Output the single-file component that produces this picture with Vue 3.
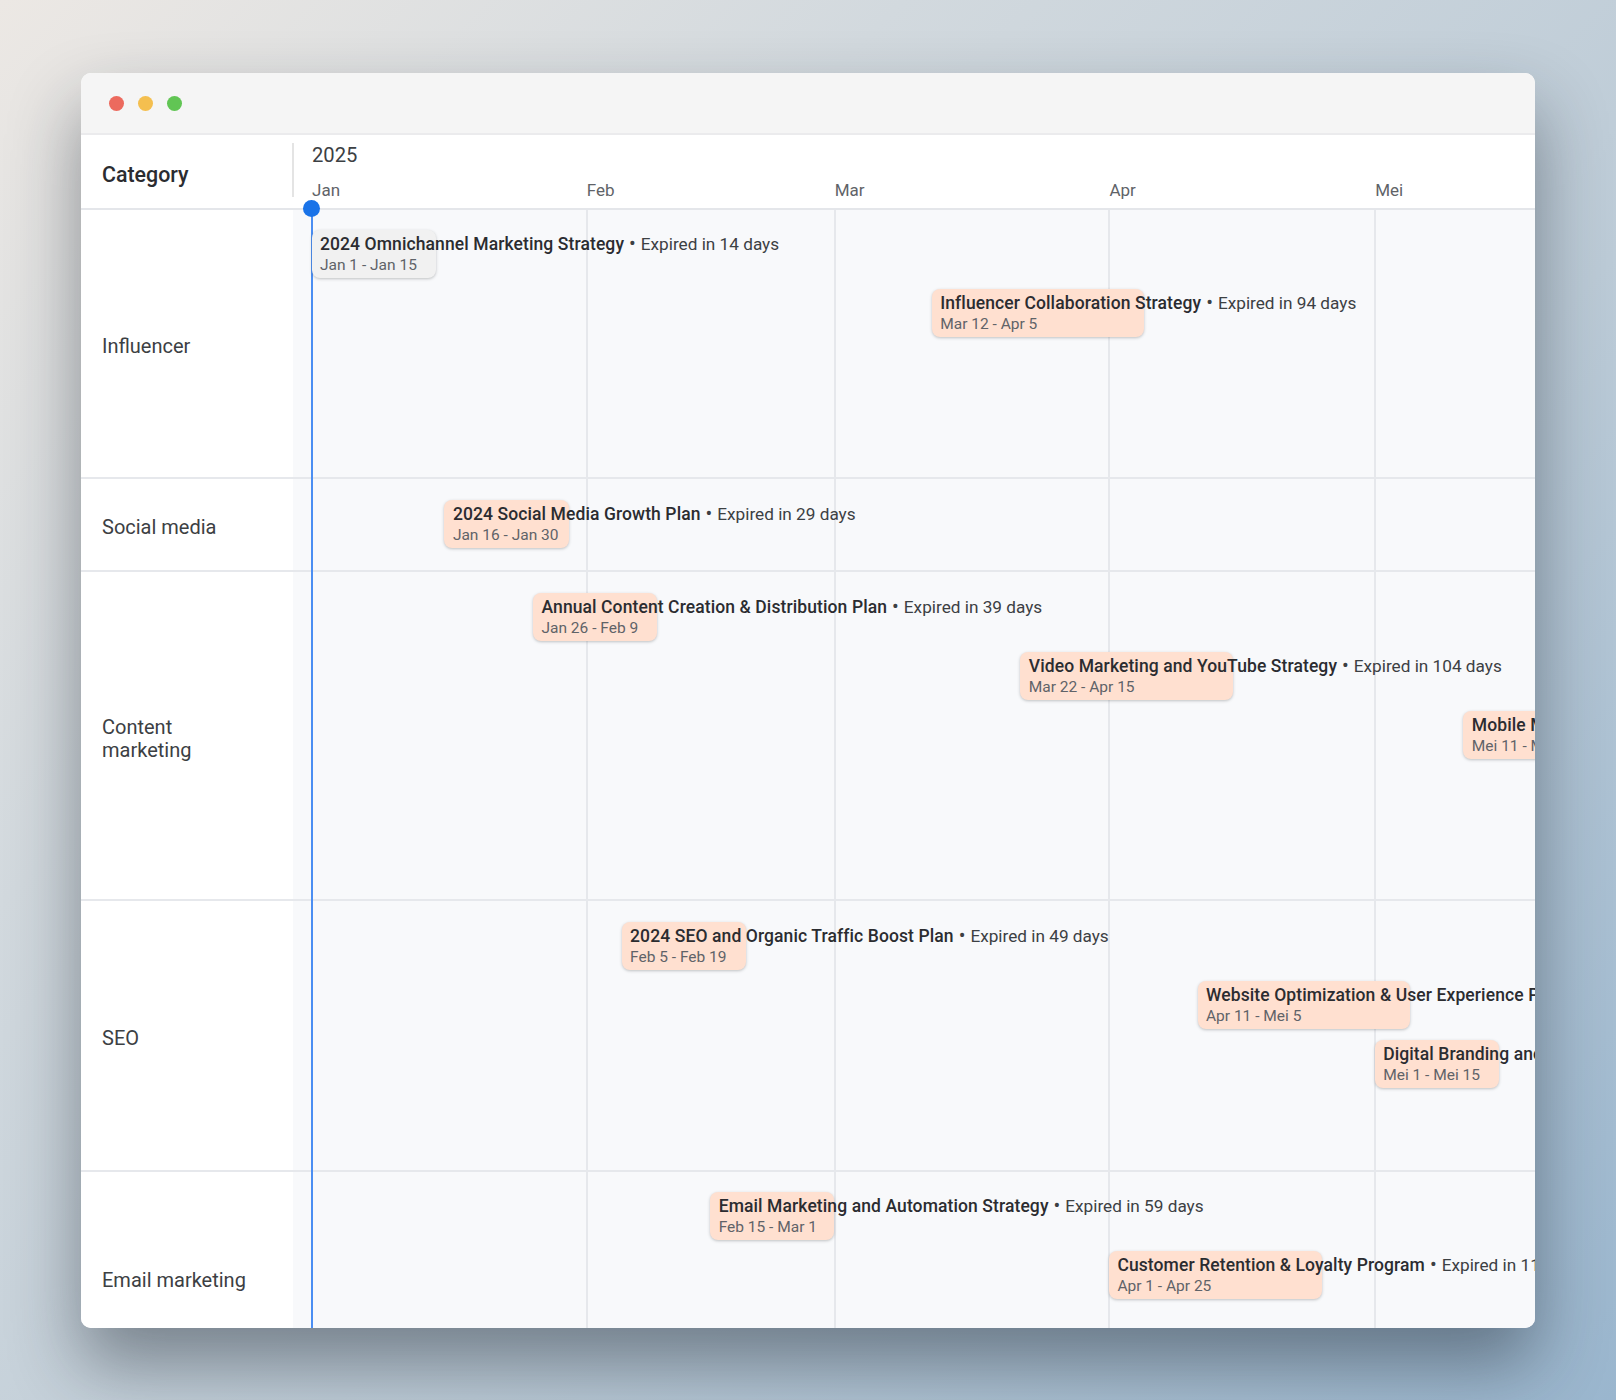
<script setup>
const DAY = 8.86

const months = [
  { name: 'Jan', days: 31 },
  { name: 'Feb', days: 28 },
  { name: 'Mar', days: 31 },
  { name: 'Apr', days: 30 },
  { name: 'Mei', days: 31 },
]

// start of every month, in days from Jan 1
const monthStarts = months.reduce((acc, m, i) => {
  acc.push(i === 0 ? 0 : acc[i - 1] + months[i - 1].days)
  return acc
}, [])

const rows = [
  {
    name: 'Influencer',
    height: 269,
    bars: [
      { title: '2024 Omnichannel Marketing Strategy', expires: 14, dates: 'Jan 1 - Jan 15', start: 0, days: 14, past: true },
      { title: 'Influencer Collaboration Strategy', expires: 94, dates: 'Mar 12 - Apr 5', start: 70, days: 24 },
    ],
  },
  {
    name: 'Social media',
    height: 93,
    bars: [
      { title: '2024 Social Media Growth Plan', expires: 29, dates: 'Jan 16 - Jan 30', start: 15, days: 14 },
    ],
  },
  {
    name: 'Content marketing',
    height: 329,
    bars: [
      { title: 'Annual Content Creation & Distribution Plan', expires: 39, dates: 'Jan 26 - Feb 9', start: 25, days: 14 },
      { title: 'Video Marketing and YouTube Strategy', expires: 104, dates: 'Mar 22 - Apr 15', start: 80, days: 24 },
      { title: 'Mobile Marketing Strategy', expires: 134, dates: 'Mei 11 - Mei 25', start: 130, days: 14 },
    ],
  },
  {
    name: 'SEO',
    height: 271,
    bars: [
      { title: '2024 SEO and Organic Traffic Boost Plan', expires: 49, dates: 'Feb 5 - Feb 19', start: 35, days: 14 },
      { title: 'Website Optimization & User Experience Plan', expires: 124, dates: 'Apr 11 - Mei 5', start: 100, days: 24 },
      { title: 'Digital Branding and Identity Plan', expires: 134, dates: 'Mei 1 - Mei 15', start: 120, days: 14 },
    ],
  },
  {
    name: 'Email marketing',
    height: 212,
    bars: [
      { title: 'Email Marketing and Automation Strategy', expires: 59, dates: 'Feb 15 - Mar 1', start: 45, days: 14 },
      { title: 'Customer Retention & Loyalty Program', expires: 114, dates: 'Apr 1 - Apr 25', start: 90, days: 24 },
    ],
  },
]
</script>

<template>
  <div class="page">
    <div class="window">
      <div class="titlebar">
        <span class="dot dot-red" />
        <span class="dot dot-yellow" />
        <span class="dot dot-green" />
      </div>

      <div class="head">
        <div class="head-category"><span>Category</span></div>
        <div class="head-timeline">
          <div class="year">2025</div>
          <div class="months">
            <span
              v-for="m in months"
              :key="m.name"
              class="month"
              :style="{ width: `${m.days * DAY}px` }"
            >{{ m.name }}</span>
          </div>
        </div>
      </div>

      <div class="body">
        <div
          v-for="row in rows"
          :key="row.name"
          class="row"
          :style="{ height: `${row.height}px` }"
        >
          <div class="row-name"><span>{{ row.name }}</span></div>
          <div class="lane">
            <div
              v-for="bar in row.bars"
              :key="bar.title"
              class="bar"
              :class="{ 'bar-past': bar.past }"
              :style="{ marginLeft: `${bar.start * DAY}px`, width: `${bar.days * DAY}px` }"
            >
              <div class="bar-line">
                <span class="bar-title">{{ bar.title }}</span>
                <span class="bar-sep">•</span>
                <span class="bar-expiry">Expired in {{ bar.expires }} days</span>
              </div>
              <div class="bar-dates">{{ bar.dates }}</div>
            </div>
          </div>
        </div>

        <!-- month lines and the today marker lie over the rows -->
        <i
          v-for="(start, i) in monthStarts.slice(1)"
          :key="i"
          class="gridline"
          :style="{ left: `${230 + start * DAY}px` }"
        />
        <i class="today-line" />
        <i class="today-dot" />
      </div>
    </div>
  </div>
</template>

<style scoped>
.page {
  width: 1616px;
  height: 1400px;
  box-sizing: border-box;
  padding: 73px 0 0 81px;
  overflow: hidden;
  background: linear-gradient(135deg, #ece8e4 0%, #d2d9de 30%, #bccbd7 62%, #9ab6ce 100%);
  font-family: Roboto, "Noto Sans", sans-serif;
  color: #202124;
}

.window {
  width: 1454px;
  height: 1255px;
  display: flex;
  flex-direction: column;
  border-radius: 10px;
  overflow: hidden;
  background: #fff;
  box-shadow: 0 36px 70px rgba(20, 30, 40, 0.44);
}

.titlebar {
  flex: none;
  height: 62px;
  box-sizing: border-box;
  display: flex;
  align-items: center;
  gap: 14px;
  padding-left: 28px;
  background: #f5f5f5;
  border-bottom: 2px solid #ebebed;
}

.dot {
  width: 15px;
  height: 15px;
  border-radius: 50%;
}
.dot-red { background: #ec6a5e; }
.dot-yellow { background: #f4bf4f; }
.dot-green { background: #61c554; }

.head {
  flex: none;
  height: 75px;
  box-sizing: border-box;
  display: flex;
  border-bottom: 2px solid #e4e6ea;
}

.head-category {
  width: 213px;
  flex: none;
  box-sizing: border-box;
  padding: 8px 0 11px 21px;
}
.head-category span {
  display: flex;
  align-items: center;
  height: 100%;
  box-sizing: border-box;
  padding-top: 8px;
  border-right: 2px solid #e4e4e4;
  font-size: 21.4px;
  font-weight: 500;
  color: #2b2c30;
}

.head-timeline {
  flex: 1;
  min-width: 0;
  padding: 8px 0 0 18px;
  overflow: hidden;
}
.year {
  font-size: 20.2px;
  line-height: 24px;
  color: #3c4043;
}
.months {
  display: flex;
  margin-top: 12px;
}
.month {
  flex: none;
  font-size: 17px;
  line-height: 22px;
  color: #5f6368;
}

.body {
  flex: 1;
  min-height: 0;
  position: relative;
}

.row {
  display: flex;
  box-sizing: border-box;
  border-bottom: 2px solid #e6e8ec;
}

.row-name {
  width: 212px;
  flex: none;
  box-sizing: border-box;
  display: flex;
  align-items: center;
  padding: 6px 41px 0 21px;
  font-size: 20px;
  line-height: 23px;
  color: #3c4043;
  background: #fff;
}

.lane {
  flex: 1;
  min-width: 0;
  box-sizing: border-box;
  padding: 20px 0 0 18.6px;
  display: flex;
  flex-direction: column;
  gap: 11px;
  background: #f8f9fb;
}
.row:nth-child(n+2):nth-child(-n+4) .lane {
  padding-top: 21px;
}

.bar {
  position: relative;
  z-index: 2;
  height: 48px;
  flex: none;
  box-sizing: border-box;
  padding: 4px 0 0 8.4px;
  border-radius: 8px;
  background: #ffe0d0;
  box-shadow: 0 1px 3px rgba(60, 64, 67, 0.3);
}
.bar-past {
  background: #f1f1f1;
}

.bar-line {
  white-space: nowrap;
  font-size: 17.5px;
  line-height: 21px;
}
.bar-title {
  font-weight: 500;
  letter-spacing: 0.1px;
  color: #2b2c30;
}
.bar-sep {
  margin: 0 5px;
  font-size: 20px;
  line-height: 0;
  color: #3c4043;
}
.bar-expiry {
  font-size: 17.2px;
  color: #3c4043;
}
.bar-dates {
  white-space: nowrap;
  font-size: 15.5px;
  line-height: 21.5px;
  color: #5f6368;
}

.gridline {
  position: absolute;
  top: 0;
  bottom: 0;
  width: 2px;
  background: #e6e8ec;
  z-index: 1;
}

.today-line {
  position: absolute;
  left: 230px;
  top: 0;
  bottom: 0;
  width: 2px;
  background: #4b8ef2;
  z-index: 1;
}
.today-dot {
  position: absolute;
  left: 222.2px;
  top: -10.5px;
  width: 17px;
  height: 17px;
  border-radius: 50%;
  background: #1a73e8;
  z-index: 3;
}
</style>

<style>
html, body {
  margin: 0;
  background: #bccbd7;
}
</style>
